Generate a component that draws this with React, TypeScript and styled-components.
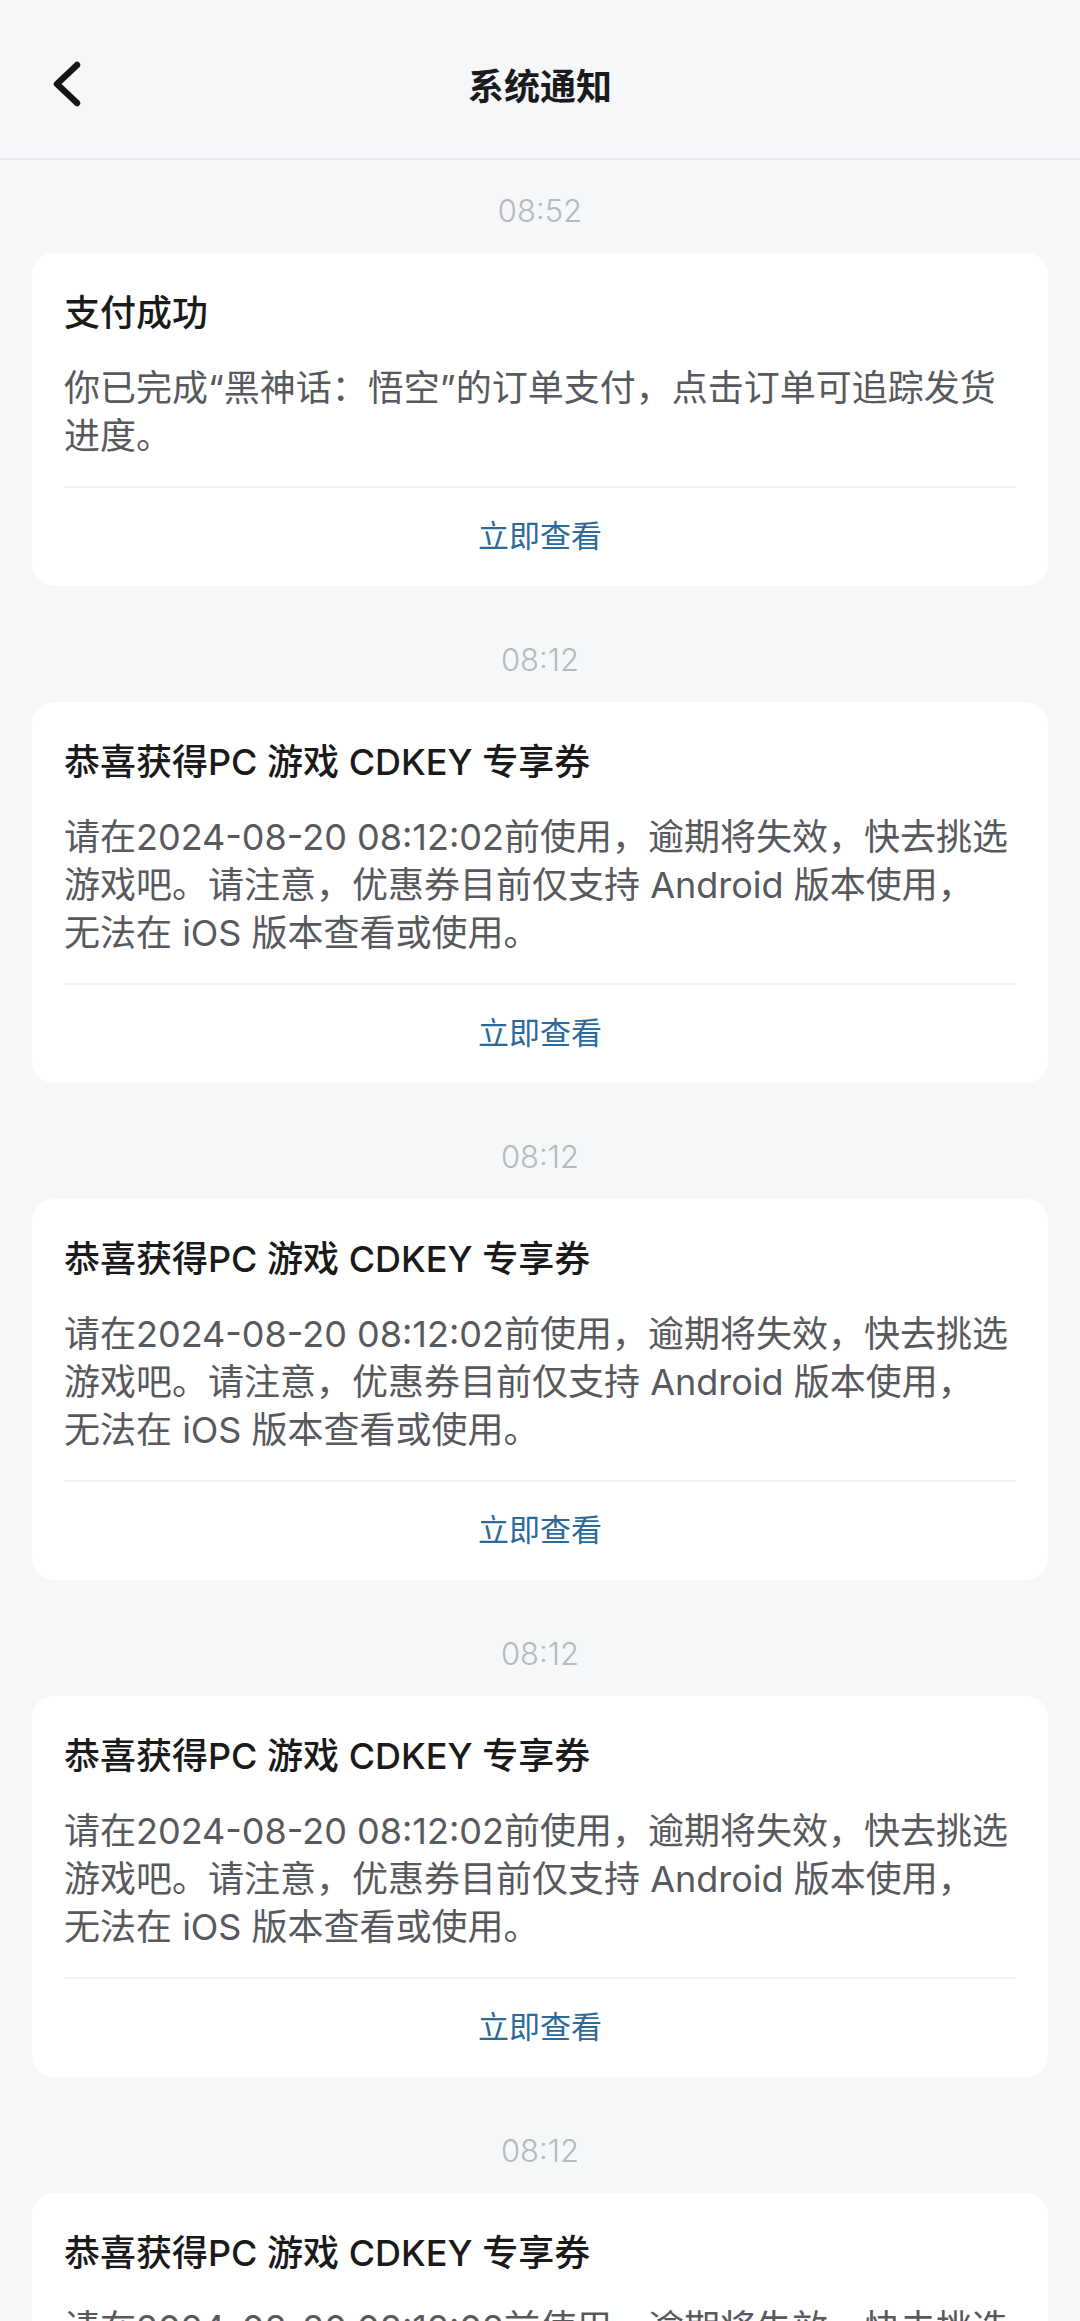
import React from "react";
import styled, { createGlobalStyle } from "styled-components";

const GlobalStyle = createGlobalStyle`
  html, body {
    margin: 0;
    padding: 0;
    background: #f6f7f9;
  }
  body {
    font-family: "Inter", "Noto Sans CJK SC", sans-serif;
    -webkit-font-smoothing: antialiased;
  }
  * { box-sizing: border-box; }
`;

const Page = styled.div`
  min-height: 100vh;
  background: #f6f7f9;
`;

const Header = styled.header`
  height: 160px;
  padding-top: 10px;
  display: grid;
  grid-template-columns: 160px 1fr 160px;
  align-items: center;
  border-bottom: 2px solid #e6e8eb;
  background: #f6f7f9;
`;

const BackButton = styled.button`
  justify-self: start;
  display: flex;
  align-items: center;
  padding: 0 0 0 47px;
  margin: 0;
  border: none;
  background: transparent;
  color: #151515;
  cursor: pointer;
`;

const HeaderTitle = styled.h1`
  margin: 0;
  text-align: center;
  font-family: "Noto Sans CJK SC", sans-serif;
  font-size: 36px;
  line-height: 50px;
  font-weight: 700;
  color: #1b1b1d;
`;

const List = styled.main`
  display: flex;
  flex-direction: column;
  padding: 33px 32px 0;
`;

const Group = styled.section`
  display: flex;
  flex-direction: column;
  & + & {
    margin-top: 56px;
  }
`;

const TimeLabel = styled.div`
  text-align: center;
  font-family: "Inter", sans-serif;
  font-size: 31px;
  line-height: 36px;
  font-weight: 300;
  color: #b5b9c0;
  margin-bottom: 24px;
`;

const Card = styled.article`
  background: #ffffff;
  border-radius: 22px;
  padding: 35px 32px 0;
`;

const CardTitle = styled.h2`
  margin: 0;
  font-size: 36px;
  line-height: 50px;
  font-weight: 500;
  color: #1a1a1a;
  white-space: nowrap;
`;

const CardBody = styled.div`
  margin-top: 26px;
  padding-bottom: 26px;
  border-bottom: 2px solid #f1f2f4;
  font-size: 36px;
  line-height: 48px;
  font-weight: 400;
  color: #57595d;
`;

const BodyLine = styled.span`
  display: block;
  white-space: nowrap;
`;

const Action = styled.button`
  display: flex;
  width: 100%;
  height: 98px;
  align-items: center;
  justify-content: center;
  margin: 0;
  padding: 0 0 8px;
  border: none;
  background: transparent;
  font-family: "Noto Sans CJK SC", sans-serif;
  font-size: 31px;
  font-weight: 400;
  color: #2c6a9c;
  cursor: pointer;
`;

const ChevronLeft = () => (
  <svg width="40" height="56" viewBox="0 0 40 56" fill="none">
    <path
      d="M30 9 L10 28 L30 47"
      stroke="#151515"
      strokeWidth="6.5"
      strokeLinecap="round"
      strokeLinejoin="round"
    />
  </svg>
);

type Notice = {
  time: string;
  title: string;
  lines: string[];
};

const couponLines = [
  "请在2024-08-20 08:12:02前使用，逾期将失效，快去挑选",
  "游戏吧。请注意，优惠券目前仅支持 Android 版本使用，",
  "无法在 iOS 版本查看或使用。",
];

const notices: Notice[] = [
  {
    time: "08:52",
    title: "支付成功",
    lines: ["你已完成“黑神话：悟空”的订单支付，点击订单可追踪发货", "进度。"],
  },
  { time: "08:12", title: "恭喜获得PC 游戏 CDKEY 专享券", lines: couponLines },
  { time: "08:12", title: "恭喜获得PC 游戏 CDKEY 专享券", lines: couponLines },
  { time: "08:12", title: "恭喜获得PC 游戏 CDKEY 专享券", lines: couponLines },
  { time: "08:12", title: "恭喜获得PC 游戏 CDKEY 专享券", lines: couponLines },
];

export default function App() {
  return (
    <Page>
      <GlobalStyle />
      <Header>
        <BackButton aria-label="返回">
          <ChevronLeft />
        </BackButton>
        <HeaderTitle>系统通知</HeaderTitle>
        <span />
      </Header>
      <List>
        {notices.map((n, i) => (
          <Group key={i}>
            <TimeLabel>{n.time}</TimeLabel>
            <Card>
              <CardTitle>{n.title}</CardTitle>
              <CardBody>
                {n.lines.map((l, j) => (
                  <BodyLine key={j}>{l}</BodyLine>
                ))}
              </CardBody>
              <Action>立即查看</Action>
            </Card>
          </Group>
        ))}
      </List>
    </Page>
  );
}
